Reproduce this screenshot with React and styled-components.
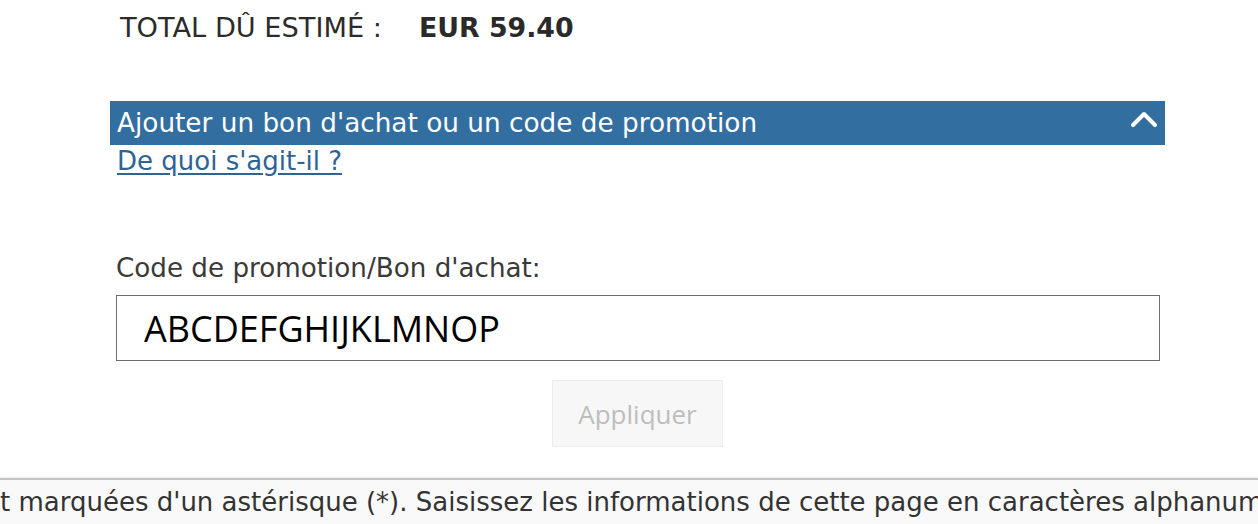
import React from "react";
import styled, { createGlobalStyle } from "styled-components";

const GlobalStyle = createGlobalStyle`
  html, body {
    margin: 0;
    padding: 0;
    background: #ffffff;
  }
  body {
    font-family: "DejaVu Sans", sans-serif;
    color: #333;
    overflow: hidden;
  }
`;

const Page = styled.div`
  width: 1258px;
  height: 524px;
  display: flex;
  flex-direction: column;
  overflow: hidden;
`;

const Content = styled.div`
  margin-left: 110px;
  width: 1055px;
  display: flex;
  flex-direction: column;
  flex: 1;
`;

const TotalRow = styled.div`
  display: flex;
  align-items: baseline;
  gap: 37px;
  padding: 12px 0 0 10px;
  height: 48px;
  font-size: 27.2px;
  color: #2b2b2b;
`;

const Amount = styled.strong`
  font-weight: bold;
  font-size: 26.8px;
  color: #2a2a2a;
`;

const Accordion = styled.div`
  margin-top: 41px;
`;

const Header = styled.button`
  width: 100%;
  height: 44px;
  border: 0;
  margin: 0;
  padding: 0 7px 0 7px;
  display: flex;
  align-items: center;
  justify-content: space-between;
  background: #336ea0;
  color: #fff;
  font-family: inherit;
  font-size: 26.3px;
  cursor: pointer;
`;

const Chevron = styled.svg`
  width: 28px;
  height: 18px;
  margin-top: -8px;
`;

const HelpLink = styled.a`
  display: inline-block;
  margin-left: 7px;
  font-size: 26px;
  line-height: 32px;
  color: #2f6394;
  text-decoration: underline;
  text-underline-offset: 3px;
`;

const Field = styled.div`
  margin: 75px 5px 0 6px;
  display: flex;
  flex-direction: column;
`;

const Label = styled.label`
  font-size: 26.2px;
  color: #3a3a3a;
  line-height: 32px;
`;

const Input = styled.input`
  box-sizing: border-box;
  margin-top: 11px;
  width: 100%;
  height: 66px;
  border: 1.5px solid #6e6e6e;
  padding: 0 27px;
  font-family: "Open Sans", "Noto Sans", sans-serif;
  font-size: 36px;
  color: #000;
  outline: none;
`;

const Actions = styled.div`
  display: flex;
  justify-content: center;
  margin-top: 19px;
`;

const ApplyButton = styled.button`
  width: 171px;
  height: 67px;
  background: #f7f7f7;
  border: 1px solid #ececec;
  color: #bdbdbd;
  font-family: "Open Sans", "Noto Sans", sans-serif;
  font-size: 26px;
  cursor: default;
`;

const Footer = styled.div`
  height: 44px;
  border-top: 2px solid #c4c4c4;
  box-shadow: 0 -1px 2px rgba(0, 0, 0, 0.08);
  background: #f9f9f9;
  display: flex;
  align-items: center;
  white-space: nowrap;
  overflow: hidden;
  font-size: 26px;
  color: #333;
`;

const FooterText = styled.span`
  margin-left: 0;
`;

export default function App() {
  return (
    <Page>
      <GlobalStyle />
      <Content>
        <TotalRow>
          <span>TOTAL DÛ ESTIMÉ :</span>
          <Amount>EUR 59.40</Amount>
        </TotalRow>
        <Accordion>
          <Header type="button">
            <span>Ajouter un bon d'achat ou un code de promotion</span>
            <Chevron viewBox="0 0 28 18">
              <polyline
                points="3,15 14,4 25,15"
                fill="none"
                stroke="#fff"
                strokeWidth="4"
                strokeLinecap="round"
                strokeLinejoin="round"
              />
            </Chevron>
          </Header>
          <HelpLink href="#">De quoi s'agit-il ?</HelpLink>
        </Accordion>
        <Field>
          <Label htmlFor="promo">Code de promotion/Bon d'achat:</Label>
          <Input id="promo" defaultValue="ABCDEFGHIJKLMNOP" />
        </Field>
        <Actions>
          <ApplyButton type="button" disabled>
            Appliquer
          </ApplyButton>
        </Actions>
      </Content>
      <Footer>
        <FooterText>
          t marquées d'un astérisque (*). Saisissez les informations de cette
          page en caractères alphanum
        </FooterText>
      </Footer>
    </Page>
  );
}
